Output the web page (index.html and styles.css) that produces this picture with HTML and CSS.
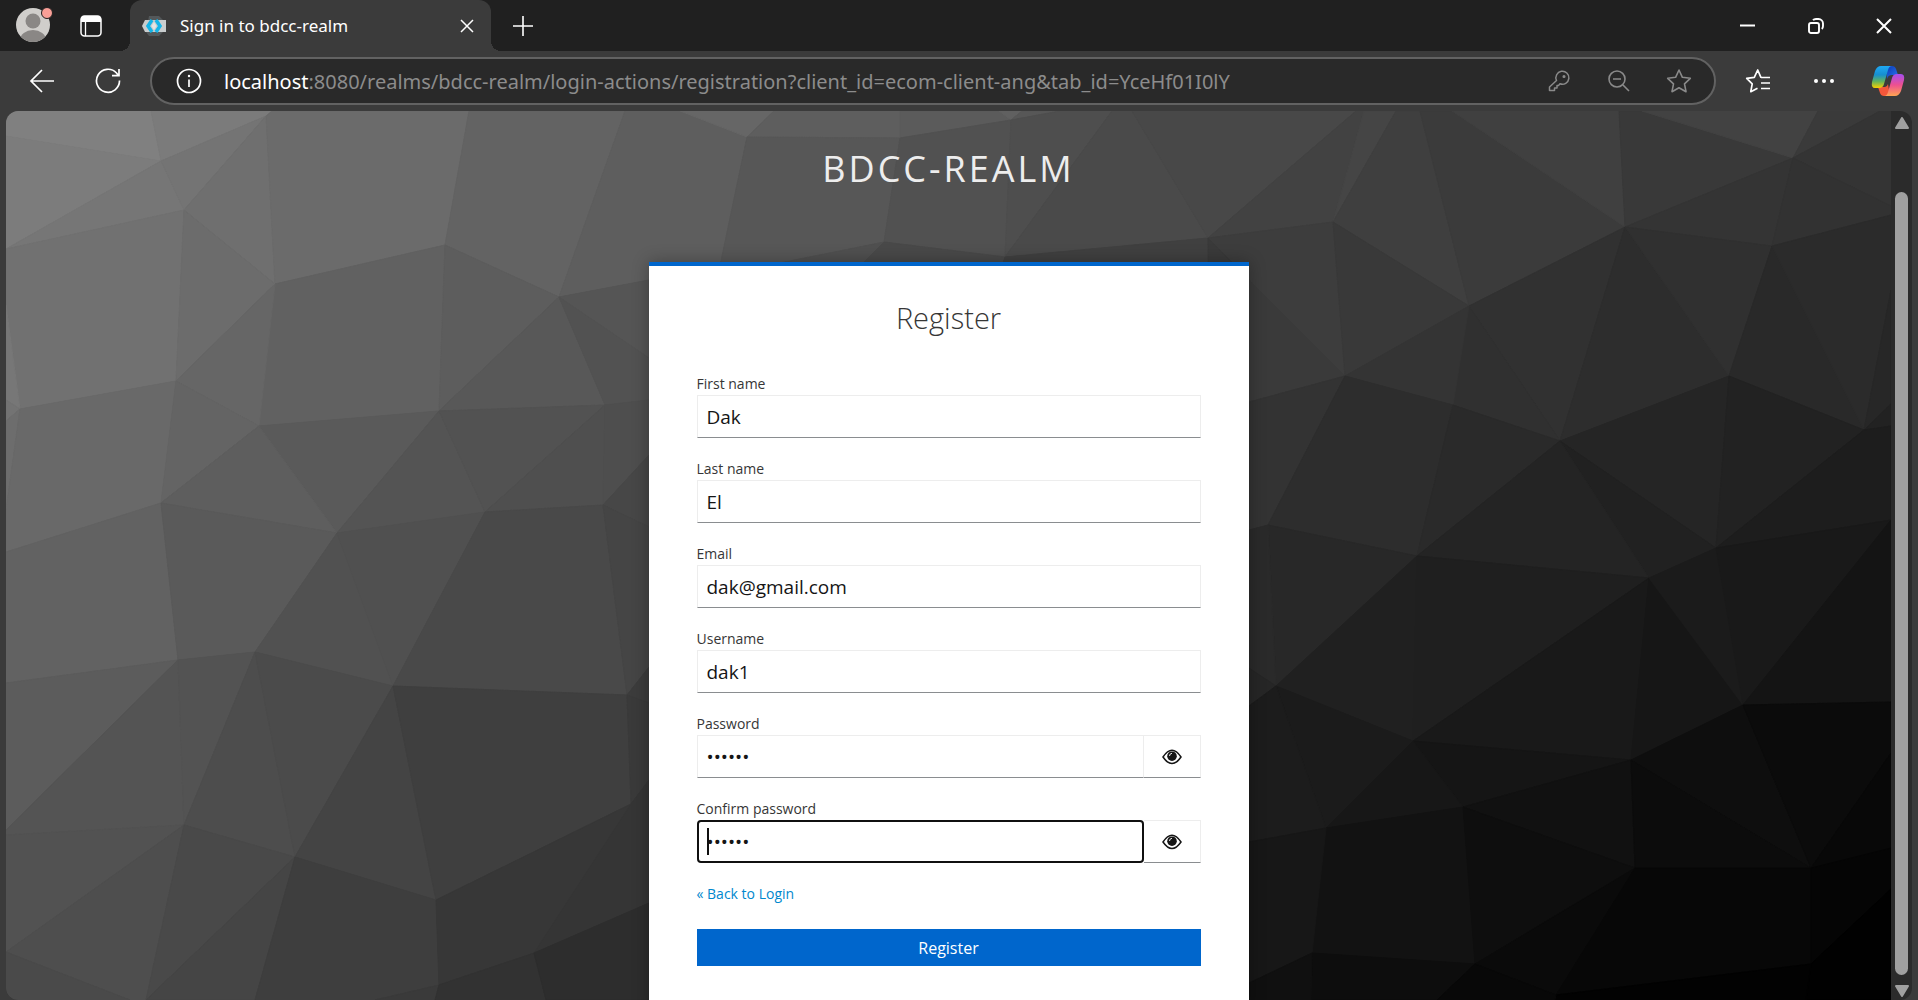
FILE: index.html
```html
<!DOCTYPE html>
<html lang="en">
<head>
<meta charset="utf-8">
<title>Sign in to bdcc-realm</title>
<link rel="stylesheet" href="styles.css">
</head>
<body>
<header class="tab-strip">
  <button class="profile" type="button" aria-label="Profile">
    <svg width="38" height="38" viewBox="0 0 38 38"><defs><clipPath id="face"><circle cx="18" cy="20" r="17"/></clipPath></defs><circle cx="18" cy="20" r="17" fill="#d0cecb"/><g clip-path="url(#face)" fill="#8a8785"><circle cx="18" cy="16" r="7.5"/><ellipse cx="18" cy="35" rx="13" ry="10"/></g><circle cx="32" cy="8" r="5.5" fill="#f99f97" stroke="#202020"/></svg>
  </button>
  <button class="tab-actions" type="button" aria-label="Tab actions">
    <svg width="24" height="24" viewBox="0 0 24 24"><rect x="2" y="2" width="20" height="20" rx="3.5" fill="none" stroke="#fff" stroke-width="1.5"/><path d="M2 8V5a3 3 0 0 1 3-3h14a3 3 0 0 1 3 3v3z" fill="#fff"/><path d="M6.500 8v14" stroke="#fff" stroke-width="1.3"/></svg>
  </button>
  <div class="tab">
    <svg class="favicon" width="24" height="20" viewBox="0 0 24 20"><path d="M7 0h10l4 4v12l-4 4H7l-3-4z" fill="#54585a"/><path d="M3 4h21v12H3l-3-6z" fill="#c9cdce"/><path d="m10 4-4 6 4 6M14 4l4 6-4 6" fill="none" stroke="#15b5e8" stroke-width="3.500"/><path d="m12 6 2.500 4-2.500 4-2.500-4z" fill="#e5e5e5"/></svg>
    <span class="tab-title">Sign in to bdcc-realm</span>
    <button class="tab-close" type="button" aria-label="Close tab"><svg width="14" height="14" viewBox="0 0 14 14"><path d="m1 1 12 12M13 1 1 13" stroke="#fff" stroke-width="1.5"/></svg></button>
  </div>
  <button class="new-tab" type="button" aria-label="New tab"><svg width="22" height="22" viewBox="0 0 22 22"><path d="M11 1v20M1 11h20" stroke="#fff" stroke-width="1.6"/></svg></button>
  <div class="window-controls">
    <button type="button" aria-label="Minimize"><svg width="16" height="16" viewBox="0 0 16 16"><path d="M0 7.500h15" stroke="#fff" stroke-width="2"/></svg></button>
    <button type="button" aria-label="Restore"><svg width="16" height="16" viewBox="0 0 16 16" fill="none" stroke="#fff" stroke-width="1.900"><rect x="1" y="5" width="10" height="10" rx="2"/><path d="M5 2.200Q6 1 8 1h2.500a4.500 4.500 0 0 1 4.500 4.500V8q0 2-1.200 3"/></svg></button>
    <button type="button" aria-label="Close"><svg width="16" height="16" viewBox="0 0 16 16"><path d="m1 1 14 14M15 1 1 15" stroke="#fff" stroke-width="2"/></svg></button>
  </div>
</header>

<nav class="toolbar" aria-label="Browser toolbar">
  <button type="button" class="tool" aria-label="Back"><svg width="26" height="24" viewBox="0 0 26 24" fill="none" stroke="#fff" stroke-width="1.700"><path d="M13 1 2 12l11 11M2 12h23"/></svg></button>
  <button type="button" class="tool" aria-label="Refresh"><svg width="26" height="26" viewBox="0 0 26 26" fill="none" stroke="#fff" stroke-width="1.700"><path d="M24.500 12.500A11.500 11.500 0 1 1 21.500 5l2 2.500M24 1v6.700h-7"/></svg></button>
  <div class="address">
    <button type="button" class="site-info" aria-label="Site information"><svg width="26" height="26" viewBox="0 0 26 26"><circle cx="13" cy="13" r="11.500" fill="none" stroke="#fff" stroke-width="1.700"/><path d="M13 11.500V19" stroke="#fff" stroke-width="1.700"/><circle cx="13" cy="8" r="1.200" fill="#fff"/></svg></button>
    <div class="url"><span class="host">localhost</span>:8080/realms/bdcc-realm/login-actions/registration?client_id=ecom-client-ang&amp;tab_id=YceHf01I0lY</div>
    <button type="button" class="address-action" aria-label="Saved passwords"><svg width="22" height="22" viewBox="0 0 22 22" fill="none" stroke="#8a8a8a" stroke-width="1.500" stroke-linejoin="round"><path d="M8.500 10.500A6.500 6.500 0 1 1 12 13.800L10.500 15.500H9V18H6.500v2.500H1.500V17z"/><circle cx="16" cy="6.500" r=".8" fill="#8a8a8a"/></svg></button>
    <button type="button" class="address-action" aria-label="Zoom out"><svg width="22" height="22" viewBox="0 0 22 22" fill="none" stroke="#8a8a8a" stroke-width="1.600"><circle cx="9" cy="9" r="8"/><path d="M5 9h8M15 15l6 6"/></svg></button>
    <button type="button" class="address-action" aria-label="Add to favorites"><svg width="26" height="26" viewBox="0 0 26 26" fill="none" stroke="#8a8a8a" stroke-width="1.600" stroke-linejoin="round"><path d="m13 2 3.400 7.300 7.900 1-5.800 5.500 1.500 7.900-7-3.900-7 3.900 1.500-7.900L1.700 10.300l7.900-1z"/></svg></button>
  </div>
  <button type="button" class="tool" aria-label="Favorites"><svg width="26" height="26" viewBox="0 0 26 26" fill="none" stroke="#fff" stroke-width="1.700" stroke-linejoin="round"><path d="M16 9.200h-.2L12.700 2 9.300 9.300l-7.600 1 5.500 5.500L5.800 23.700l6.700-3.500M16 9.500h9M16 15h9M16 20.500h9"/></svg></button>
  <button type="button" class="tool" aria-label="Settings and more"><svg width="22" height="6" viewBox="0 0 22 6" fill="#fff"><circle cx="3" cy="3" r="2"/><circle cx="11" cy="3" r="2"/><circle cx="19" cy="3" r="2"/></svg></button>
  <button type="button" class="tool copilot" aria-label="Copilot">
    <svg width="34" height="32" viewBox="0 0 34 32">
      <defs>
        <linearGradient id="cp-left" x1="0" y1="0" x2="0" y2="1"><stop offset="0" stop-color="#1fa9f5"/><stop offset=".4" stop-color="#168fd0"/><stop offset=".7" stop-color="#63b45c"/><stop offset="1" stop-color="#f7cf00"/></linearGradient>
        <linearGradient id="cp-right" x1="0" y1="0" x2="0" y2="1"><stop offset="0" stop-color="#a54df0"/><stop offset=".5" stop-color="#ee5090"/><stop offset="1" stop-color="#ffa552"/></linearGradient>
        <linearGradient id="cp-top" x1="0" y1="0" x2="1" y2="1"><stop offset="0" stop-color="#0b37b5"/><stop offset="1" stop-color="#2a78ee"/></linearGradient>
      </defs>
      <path d="M15 1h6q3 0 4 3l2 6h-6q-4 0-5 4z" fill="url(#cp-top)"/>
      <path d="M19 31h-6q-3 0-4-3l-2-6h7q2 0 3-3z" fill="#f4573a"/>
      <path d="M10 1h11q-3 0-4 4l-4 14q-1 4-5 4H4q-4 0-3-6L4 6q2-5 6-5z" fill="url(#cp-left)"/>
      <path d="M24 31H13q3 0 4-4l4-14q1-4 5-4h4q4 0 3 6l-3 11q-2 5-6 5z" fill="url(#cp-right)"/>
    </svg>
  </button>
</nav>

<div class="window-frame">
  <main class="page">
    <svg class="facets" viewBox="6 111 1885 889" preserveAspectRatio="none" aria-hidden="true">
      <polygon color="#808080" points="6,111 151,111 161,161 6,136"/>
      <polygon color="#7b7b7b" points="151,111 272,111 266,116 161,161"/>
      <polygon color="#7c7c7c" points="6,136 161,161 6,249"/>
      <polygon color="#767676" points="161,161 184,210 6,249"/>
      <polygon color="#747474" points="161,161 266,116 184,210"/>
      <polygon color="#6f6f6f" points="266,116 275,284 184,210"/>
      <polygon color="#6b6b6b" points="272,111 469,111 445,245 275,284 266,116"/>
      <polygon color="#717171" points="6,249 184,210 176,381 20,409 6,305"/>
      <polygon color="#6c6c6c" points="184,210 275,284 176,381"/>
      <polygon color="#636363" points="469,111 625,111 559,297 445,245"/>
      <polygon color="#5e5e5e" points="625,111 680,111 747,137 720,266 649,280 559,297"/>
      <polygon color="#616161" points="275,284 445,245 439,411 259,426"/>
      <polygon color="#666666" points="275,284 259,426 176,381"/>
      <polygon color="#5d5d5d" points="445,245 559,297 439,411"/>
      <polygon color="#585858" points="559,297 605,405 439,411"/>
      <polygon color="#555555" points="559,297 649,280 649,358"/>
      <polygon color="#525252" points="559,297 649,358 649,400 605,405"/>
      <polygon color="#777777" points="6,305 20,409 6,400"/>
      <polygon color="#737373" points="6,400 20,409 6,421"/>
      <polygon color="#6d6d6d" points="6,421 20,409 6,510"/>
      <polygon color="#696969" points="20,409 176,381 161,503 6,552 6,510"/>
      <polygon color="#646464" points="176,381 259,426 161,503"/>
      <polygon color="#5a5a5a" points="259,426 439,411 337,533"/>
      <polygon color="#5e5e5e" points="161,503 259,426 337,533"/>
      <polygon color="#545454" points="439,411 485,512 337,533"/>
      <polygon color="#525252" points="439,411 605,405 485,512"/>
      <polygon color="#4f4f4f" points="605,405 603,505 485,512"/>
      <polygon color="#4e4e4e" points="605,405 649,400 649,455 603,505"/>
      <polygon color="#474747" points="603,505 649,455 649,527"/>
      <polygon color="#626262" points="6,552 161,503 178,660 6,683"/>
      <polygon color="#5a5a5a" points="161,503 337,533 255,652 178,660"/>
      <polygon color="#515151" points="337,533 393,686 255,652"/>
      <polygon color="#505050" points="337,533 485,512 393,686"/>
      <polygon color="#494949" points="485,512 603,505 627,695 393,686"/>
      <polygon color="#454545" points="603,505 649,527 649,667 627,695"/>
      <polygon color="#5c5c5c" points="6,683 178,660 6,830"/>
      <polygon color="#545454" points="6,830 178,660 184,825 6,835"/>
      <polygon color="#535353" points="178,660 255,652 184,825"/>
      <polygon color="#4d4d4d" points="255,652 295,857 184,825"/>
      <polygon color="#4b4b4b" points="255,652 393,686 295,857"/>
      <polygon color="#444444" points="393,686 436,900 295,857"/>
      <polygon color="#3f3f3f" points="393,686 627,695 631,804 436,900"/>
      <polygon color="#3c3c3c" points="627,695 649,667 649,703"/>
      <polygon color="#3a3a3a" points="627,695 649,703 649,780 631,804"/>
      <polygon color="#525252" points="6,835 184,825 6,952"/>
      <polygon color="#4e4e4e" points="184,825 146,1000 130,1000 6,952"/>
      <polygon color="#4a4a4a" points="6,952 130,1000 6,1000"/>
      <polygon color="#494949" points="184,825 295,857 146,1000"/>
      <polygon color="#454545" points="295,857 255,1000 146,1000"/>
      <polygon color="#3e3e3e" points="295,857 436,900 439,985 375,1000 255,1000"/>
      <polygon color="#3a3a3a" points="375,1000 439,985 435,1000"/>
      <polygon color="#373737" points="436,900 631,804 534,953 439,985"/>
      <polygon color="#353535" points="631,804 649,780 649,903 534,953"/>
      <polygon color="#323232" points="439,985 534,953 546,1000 435,1000"/>
      <polygon color="#2d2d2d" points="534,953 649,903 649,1000 546,1000"/>
      <polygon color="#666666" points="680,111 774,111 747,137"/>
      <polygon color="#5e5e5e" points="774,111 900,111 900,138 747,137"/>
      <polygon color="#5b5b5b" points="900,111 999,111 1011,120 900,138"/>
      <polygon color="#606060" points="999,111 1022,111 1011,120"/>
      <polygon color="#575757" points="1022,111 1060,111 1011,120"/>
      <polygon color="#575757" points="747,137 900,138 884,242 765,266 720,266"/>
      <polygon color="#515151" points="900,138 1011,120 1005,257 884,242"/>
      <polygon color="#4e4e4e" points="1011,120 1060,111 1112,111 1005,257"/>
      <polygon color="#4a4a4a" points="1112,111 1132,111 1208,238 1005,257"/>
      <polygon color="#484848" points="1132,111 1356,111 1208,238"/>
      <polygon color="#505050" points="765,266 884,242 860,266"/>
      <polygon color="#494949" points="884,242 1005,257 1002,266 860,266"/>
      <polygon color="#404040" points="1005,257 1208,238 1209,266 1002,266"/>
      <polygon color="#424242" points="1208,238 1356,111 1364,111 1333,222"/>
      <polygon color="#454545" points="1364,111 1396,111 1333,222"/>
      <polygon color="#3f3f3f" points="1333,222 1396,111 1420,111 1469,306"/>
      <polygon color="#3d3d3d" points="1208,238 1333,222 1345,376 1252,283"/>
      <polygon color="#3a3a3a" points="1208,238 1252,283 1345,376 1249,402 1209,402"/>
      <polygon color="#393939" points="1333,222 1469,306 1345,376"/>
      <polygon color="#3b3b3b" points="1420,111 1452,111 1625,227 1469,306"/>
      <polygon color="#404040" points="1452,111 1619,111 1625,227"/>
      <polygon color="#393939" points="1619,111 1642,111 1793,158 1625,227"/>
      <polygon color="#424242" points="1642,111 1818,111 1793,158"/>
      <polygon color="#3a3a3a" points="1818,111 1880,111 1793,158"/>
      <polygon color="#343434" points="1880,111 1891,111 1891,206 1793,158"/>
      <polygon color="#343434" points="1625,227 1793,158 1772,246"/>
      <polygon color="#323232" points="1793,158 1891,206 1891,215 1772,246"/>
      <polygon color="#313131" points="1625,227 1469,306 1560,441"/>
      <polygon color="#303030" points="1469,306 1453,405 1560,441"/>
      <polygon color="#343434" points="1469,306 1345,376 1453,405"/>
      <polygon color="#2d2d2d" points="1625,227 1729,376 1560,441"/>
      <polygon color="#303030" points="1625,227 1772,246 1729,376"/>
      <polygon color="#292929" points="1772,246 1864,430 1729,376"/>
      <polygon color="#2b2b2b" points="1772,246 1891,215 1891,290 1864,430"/>
      <polygon color="#272727" points="1864,430 1891,290 1891,404"/>
      <polygon color="#222222" points="1864,430 1891,404 1891,426"/>
      <polygon color="#333333" points="1345,376 1268,525 1249,530 1249,402"/>
      <polygon color="#2d2d2d" points="1345,376 1453,405 1417,556 1268,525"/>
      <polygon color="#2a2a2a" points="1453,405 1560,441 1417,556"/>
      <polygon color="#252525" points="1560,441 1729,376 1716,548"/>
      <polygon color="#212121" points="1560,441 1716,548 1649,578"/>
      <polygon color="#242424" points="1560,441 1417,556 1649,578"/>
      <polygon color="#222222" points="1729,376 1864,430 1716,548"/>
      <polygon color="#1d1d1d" points="1864,430 1891,426 1891,520 1716,548"/>
      <polygon color="#282828" points="1268,525 1417,556 1276,686"/>
      <polygon color="#2a2a2a" points="1249,530 1268,525 1276,686 1249,668"/>
      <polygon color="#262626" points="1249,668 1276,686 1249,706"/>
      <polygon color="#202020" points="1417,556 1276,686 1413,741"/>
      <polygon color="#1f1f1f" points="1417,556 1649,578 1413,741"/>
      <polygon color="#191919" points="1649,578 1413,741 1631,760"/>
      <polygon color="#161616" points="1649,578 1743,705 1631,760"/>
      <polygon color="#1b1b1b" points="1649,578 1716,548 1743,705"/>
      <polygon color="#191919" points="1716,548 1891,520 1743,705"/>
      <polygon color="#141414" points="1891,520 1891,702 1743,705"/>
      <polygon color="#1b1b1b" points="1276,686 1413,741 1326,828"/>
      <polygon color="#1c1c1c" points="1249,706 1276,686 1326,828 1249,842"/>
      <polygon color="#151515" points="1413,741 1631,760 1463,807"/>
      <polygon color="#171717" points="1413,741 1463,807 1326,828"/>
      <polygon color="#111111" points="1631,760 1463,807 1635,868"/>
      <polygon color="#0e0e0e" points="1631,760 1743,705 1811,868"/>
      <polygon color="#0c0c0c" points="1631,760 1635,868 1811,868"/>
      <polygon color="#0b0b0b" points="1743,705 1891,702 1891,753 1811,868"/>
      <polygon color="#080808" points="1891,753 1891,848 1811,868"/>
      <polygon color="#121212" points="1463,807 1326,828 1312,953 1475,964"/>
      <polygon color="#171717" points="1326,828 1249,842 1249,983 1312,953"/>
      <polygon color="#0e0e0e" points="1463,807 1635,868 1475,964"/>
      <polygon color="#0a0a0a" points="1635,868 1475,964 1556,995"/>
      <polygon color="#070707" points="1635,868 1811,868 1811,964 1556,995"/>
      <polygon color="#050505" points="1811,868 1891,848 1891,889 1811,964"/>
      <polygon color="#010101" points="1811,964 1891,889 1891,1000 1806,1000"/>
      <polygon color="#020202" points="1556,995 1811,964 1806,1000 1555,1000"/>
      <polygon color="#0d0d0d" points="1312,953 1475,964 1437,1000 1311,1000"/>
      <polygon color="#101010" points="1249,983 1312,953 1311,1000 1249,1000"/>
      <polygon color="#080808" points="1475,964 1556,995 1555,1000 1437,1000"/>
    </svg>
    <div class="login">
      <div class="realm">bdcc-realm</div>
      <section class="card">
        <h1>Register</h1>
        <form>
          <div class="field"><label for="first">First name</label><input id="first" type="text" value="Dak"></div>
          <div class="field"><label for="last">Last name</label><input id="last" type="text" value="El"></div>
          <div class="field"><label for="email">Email</label><input id="email" type="text" value="dak@gmail.com"></div>
          <div class="field"><label for="username">Username</label><input id="username" type="text" value="dak1"></div>
          <div class="field"><label for="password">Password</label>
            <div class="secret"><input id="password" type="password" value="dak123"><button type="button" aria-label="Show password"><svg width="20" height="16" viewBox="0 0 20 16"><path d="M1 8q9-13.500 18 0-9 13-18 0z" fill="none" stroke="#151515" stroke-width="1.500"/><circle cx="10" cy="7.200" r="4.800" fill="#151515"/><path d="M7.500 7q0-2.500 2.500-2.700" fill="none" stroke="#fff" stroke-width=".9"/></svg></button></div>
          </div>
          <div class="field"><label for="confirm">Confirm password</label>
            <div class="secret focused"><input id="confirm" type="password" value="dak123"><span class="caret"></span><button type="button" aria-label="Show confirmed password"><svg width="20" height="16" viewBox="0 0 20 16"><path d="M1 8q9-13.500 18 0-9 13-18 0z" fill="none" stroke="#151515" stroke-width="1.500"/><circle cx="10" cy="7.200" r="4.800" fill="#151515"/><path d="M7.500 7q0-2.500 2.500-2.700" fill="none" stroke="#fff" stroke-width=".9"/></svg></button></div>
          </div>
          <a class="back" href="#">« Back to Login</a>
          <button class="submit" type="submit">Register</button>
        </form>
      </section>
    </div>
  </main>
  <div class="scrollbar" aria-hidden="true">
    <svg width="14" height="12" viewBox="0 0 14 12"><path d="m7 1 6 10H1z" fill="#a0a0a0" stroke="#a0a0a0" stroke-width="2" stroke-linejoin="round"/></svg>
    <div class="thumb"></div>
    <svg width="14" height="12" viewBox="0 0 14 12"><path d="M7 11 1 1h12z" fill="#a0a0a0" stroke="#a0a0a0" stroke-width="2" stroke-linejoin="round"/></svg>
  </div>
</div>
</body>
</html>
```

FILE: styles.css
```css
* { box-sizing: border-box; }

body {
  margin: 0;
  height: 100vh;
  display: flex;
  flex-direction: column;
  overflow: hidden;
  background: #3b3b3b;
  font-family: "Open Sans", "Noto Sans", sans-serif;
}

button {
  display: flex;
  align-items: center;
  justify-content: center;
  flex: none;
  padding: 0;
  border: 0;
  background: none;
  color: inherit;
  font: inherit;
}

svg { display: block; flex: none; }

/* Tab strip */
.tab-strip {
  display: flex;
  flex: none;
  height: 51px;
  background: #202020;
  color: #fff;
}
.profile { width: 68px; padding-bottom: 4px; }
.tab-actions { width: 46px; }
.tab {
  position: relative;
  display: flex;
  align-items: center;
  width: 361px;
  margin-left: 16px;
  padding: 0 8px 0 12px;
  border-radius: 12px 12px 0 0;
  background: #3b3b3b;
}
.tab::before,
.tab::after {
  content: "";
  position: absolute;
  bottom: 0;
  width: 10px;
  height: 10px;
}
.tab::before { right: 100%; background: radial-gradient(circle at 0 0, transparent 10px, #3b3b3b 10px); }
.tab::after { left: 100%; background: radial-gradient(circle at 100% 0, transparent 10px, #3b3b3b 10px); }
.tab-title { flex: 1; margin-left: 14px; font-family: "Noto Sans", sans-serif; font-size: 17px; white-space: nowrap; }
.tab-close { width: 32px; height: 32px; }
.new-tab { width: 64px; }
.window-controls { display: flex; margin-left: auto; }
.window-controls button { width: 68px; }

/* Toolbar */
.toolbar {
  display: flex;
  align-items: center;
  flex: none;
  height: 60px;
  padding-left: 9px;
}
.tool { width: 66px; height: 48px; }
.copilot { width: 61px; }
.address {
  display: flex;
  align-items: center;
  flex: 1;
  min-width: 0;
  height: 48px;
  margin: 0 9px;
  padding: 0 5px 0 4px;
  border: 2px solid #626262;
  border-radius: 24px;
  background: #292929;
}
.site-info { width: 66px; }
.url {
  flex: 1;
  min-width: 0;
  padding-left: 2px;
  overflow: hidden;
  color: #8c8c8c;
  font-family: "Noto Sans", sans-serif;
  font-size: 20px;
  white-space: nowrap;
}
.host { color: #fff; }
.address-action { width: 60px; height: 40px; }

/* Page area and scrollbar */
.window-frame {
  display: flex;
  flex: 1;
  min-height: 0;
  margin: 0 6px;
  overflow: hidden;
  border-radius: 12px;
  background: #2b2b2b;
}
.page { position: relative; flex: 1; overflow: hidden; }
.facets { position: absolute; inset: 0; width: 100%; height: 100%; }
.facets polygon { fill: currentColor; stroke: currentColor; stroke-width: 1px; }
.scrollbar {
  display: flex;
  flex-direction: column;
  align-items: center;
  width: 21px;
  padding: 6px 0 3px;
}
.thumb { flex: 1; width: 13px; margin: 63px 0 10px; border-radius: 7px; background: #a0a0a0; }

/* Login page */
.login { position: relative; padding-top: 33px; }
.realm {
  color: #ededed;
  font-size: 36px;
  line-height: 50px;
  letter-spacing: 3px;
  text-align: center;
  text-transform: uppercase;
}
.card {
  width: 600px;
  max-width: 100%;
  margin: 68px auto 0;
  padding: 32px 48px 48px;
  border-top: 4px solid #0066cc;
  background: #fff;
  box-shadow: 0 0 16px rgba(3, 3, 3, 0.3);
  color: #363636;
}
h1 {
  margin: 0 0 35px;
  font-size: 29px;
  font-weight: 300;
  line-height: 40px;
  text-align: center;
}
form { display: flex; flex-direction: column; gap: 20px; }
.field { display: flex; flex-direction: column; }
label { font-size: 14px; line-height: 22px; }
input {
  width: 100%;
  min-width: 0;
  height: 43px;
  padding: 0 9px;
  border: 1px solid #ededed;
  border-bottom-color: #8a8d90;
  border-radius: 0;
  outline: 0;
  background: #fff;
  color: #151515;
  font: 19px "Open Sans", sans-serif;
}
.secret { position: relative; display: flex; }
.secret button {
  width: 57px;
  border: 1px solid #ededed;
  border-left: 0;
  border-bottom-color: #8a8d90;
}
.focused input { border: 2px solid #101010; border-radius: 4px; padding: 0 8px; }
.caret {
  position: absolute;
  left: 10px;
  top: 8px;
  width: 2px;
  height: 27px;
  background: #101010;
}
.back { align-self: flex-start; color: #0088ce; font-size: 14px; line-height: 22px; text-decoration: none; }
.submit {
  height: 37px;
  margin-top: 4px;
  background: #0066cc;
  color: #fff;
  font-size: 16px;
  font-weight: 500;
}
```
